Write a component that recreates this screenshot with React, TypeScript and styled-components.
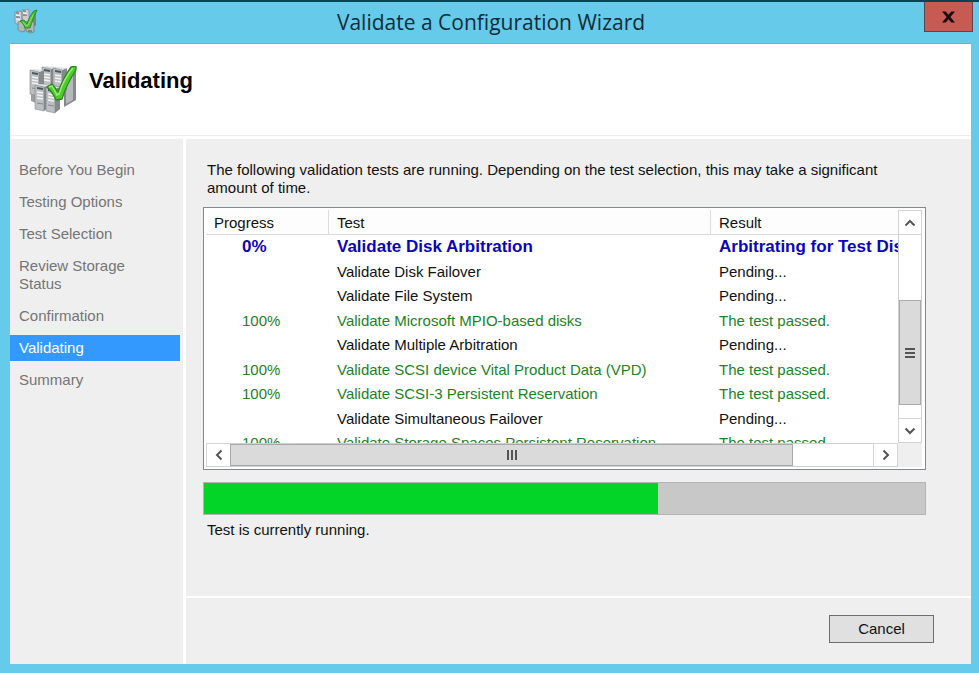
import React from 'react';
import styled, { createGlobalStyle } from 'styled-components';

const Page = createGlobalStyle`
  * { box-sizing: border-box; }
  body { margin: 0; background: #66cbeb; }
  button { font: inherit; color: inherit; padding: 0; margin: 0; border-radius: 0; }
`;

const Window = styled.div`
  display: flex;
  flex-direction: column;
  height: 100vh;
  min-height: 480px;
  padding: 0 8px 9px 10px;
  border-top: 2px solid #0b4256;
  background: #66cbeb;
  color: #111;
  font: 15px/18px "Liberation Sans", Arial, sans-serif;
`;

const TitleBar = styled.header`
  display: flex;
  align-items: flex-start;
  justify-content: space-between;
  height: 41px;
  flex: none;
`;

const TitleSlot = styled.div`
  width: 48px;
  padding: 7px 0 0 4px;
`;

const Title = styled.h1`
  margin: 0;
  padding-top: 4px;
  color: #122b38;
  font: 400 21px/32px "Open Sans", "Noto Sans", sans-serif;
`;

const CloseButton = styled.button`
  display: grid;
  place-items: center;
  width: 49px;
  height: 30px;
  margin-right: -2px;
  border: 1px solid #5d4448;
  border-top: 0;
  background: #c75b54;
`;

const Client = styled.div`
  display: flex;
  flex-direction: column;
  flex: 1;
  min-height: 0;
  border-top: 1px solid #84a9b6;
  background: #fff;
`;

const Banner = styled.div`
  display: flex;
  align-items: flex-start;
  gap: 12px;
  flex: none;
  height: 92px;
  padding: 22px 19px 0;
  border-bottom: 1px solid #ececec;
`;

const Heading = styled.h2`
  margin: 0;
  padding-top: 2px;
  color: #000;
  font-size: 22px;
  line-height: 26px;
  font-weight: 700;
`;

const Columns = styled.div`
  display: flex;
  gap: 3px;
  flex: 1;
  min-height: 0;
  padding-top: 3px;
`;

const Steps = styled.ol`
  display: flex;
  flex-direction: column;
  gap: 6px;
  width: 173px;
  flex: none;
  margin: 0;
  padding: 18px 3px 0 0;
  list-style: none;
  background: #efefef;
`;

const Step = styled.li<{ $current?: boolean }>`
  padding: 4px 40px 4px 9px;
  color: ${p => (p.$current ? '#fff' : '#757575')};
  background: ${p => (p.$current ? '#3399ff' : 'transparent')};
`;

const Right = styled.div`
  display: flex;
  flex-direction: column;
  gap: 2px;
  flex: 1;
  min-width: 0;
`;

const Content = styled.main`
  display: flex;
  flex-direction: column;
  flex: 1;
  min-height: 0;
  padding: 22px 45px 57px 17px;
  background: #efefef;
`;

const Intro = styled.p`
  margin: 0 0 10px;
  padding: 0 4px;
`;

const ListBox = styled.section`
  display: grid;
  grid-template-columns: minmax(0, 1fr) 24px;
  grid-template-rows: minmax(0, 1fr) 24px;
  flex: 1;
  min-height: 0;
  padding: 2px 3px 2px 2px;
  border: 1px solid #828790;
  background: #fff;
`;

const TableView = styled.div`
  overflow: hidden;
`;

const TestTable = styled.table`
  width: 100%;
  table-layout: fixed;
  border-collapse: separate;
  border-spacing: 0;
`;

const Head = styled.th<{ $width?: number }>`
  width: ${p => (p.$width ? `${p.$width}px` : 'auto')};
  height: 25px;
  padding: 2px 0 0 8px;
  border-right: 1px solid #dcdcdc;
  border-bottom: 1px solid #dcdcdc;
  background: #fdfdfd;
  font-weight: 400;
  text-align: left;
  &:last-child { border-right: 0; }
`;

type State = 'running' | 'pending' | 'passed';
const stateColor = { running: '#0a06b8', pending: '#111', passed: '#1d821f' };

const Row = styled.tr<{ $state: State }>`
  height: 24px;
  color: ${p => stateColor[p.$state]};
  font-weight: ${p => (p.$state === 'running' ? 700 : 400)};
  font-size: ${p => (p.$state === 'running' ? 17 : 15)}px;
  &:nth-child(even) { height: 25px; }
`;

const Cell = styled.td<{ $indent?: boolean }>`
  padding: 0 0 0 ${p => (p.$indent ? 36 : 8)}px;
  white-space: nowrap;
`;

const ScrollBar = styled.div<{ $vertical?: boolean }>`
  display: flex;
  flex-direction: ${p => (p.$vertical ? 'column' : 'row')};
  border: 1px solid #cfcfcf;
  background: #fff;
`;

const ArrowButton = styled.button`
  display: grid;
  place-items: center;
  flex: 0 0 23px;
  border: 0;
  outline: 1px solid #d4d4d4;
  background: #fff;
`;

const Track = styled.div<{ $grow: number }>`
  flex: ${p => p.$grow} 1 0;
`;

const Thumb = styled.div<{ $grow: number }>`
  display: grid;
  place-items: center;
  flex: ${p => p.$grow} 1 0;
  border: 1px solid #a9a9a9;
  background: #dadada;
`;

const Corner = styled.div`
  background: #efefef;
`;

const Progress = styled.div`
  flex: none;
  height: 33px;
  margin-top: 12px;
  border: 1px solid #b4b4b4;
  background: #c8c8c8;
`;

const ProgressFill = styled.div`
  height: 100%;
  background: #02d528;
`;

const Status = styled.p`
  margin: 0;
  padding: 6px 4px 0;
`;

const Footer = styled.footer`
  display: flex;
  justify-content: flex-end;
  align-items: flex-start;
  flex: none;
  height: 66px;
  padding: 17px 37px 0 0;
  background: #efefef;
`;

const CancelButton = styled.button`
  width: 105px;
  height: 28px;
  border: 1px solid #6e6e6e;
  background: #e0e0e0;
`;

const Chevron = ({ turn }: { turn: number }) => (
  <svg width="12" height="12" viewBox="0 0 12 12" aria-hidden="true">
    <path d="M1.5 8.5 6 4l4.5 4.5" fill="none" stroke="#555" strokeWidth="2" transform={`rotate(${turn} 6 6)`} />
  </svg>
);

const Grip = ({ turn }: { turn: number }) => (
  <svg width="12" height="12" viewBox="0 0 12 12" aria-hidden="true">
    <path d="M1 2h10M1 6h10M1 10h10" stroke="#555" strokeWidth="2" transform={`rotate(${turn} 6 6)`} />
  </svg>
);

const towers = [[13, 0], [24, 1], [1, 3], [6, 18], [17, 20]];

const ClusterIcon = () => (
  <svg width="48" height="48" viewBox="0 0 48 48" aria-hidden="true">
    <path d="m35 8 12-6v32l-12 7z" fill="#85898c" />
    <path d="m37 12 7-4v26l-7 4z" fill="#b5b9bb" />
    <path d="M2 26v9l5 2V20z" fill="#999ea1" />
    {towers.map(([x, y]) => (
      <g key={`${x}-${y}`} transform={`translate(${x} ${y})`}>
        <path d="m9 3 5-2v22l-5 4z" fill="#84898c" />
        <path d="m0 1 4-1 10 1-5 2z" fill="#dfe2e3" />
        <path d="m0 1 9 2v24l-9-2z" fill="#bbbfc1" stroke="#83888b" strokeWidth=".6" />
        <path d="m2 3 6 1v2L2 5z" fill="#4c5961" />
        <path d="m2 8 6 1M2 11l6 1M2 14l6 1" stroke="#f0f1f2" strokeWidth="1.3" />
        <path d="m2 19 6 1" stroke="#858a8d" />
      </g>
    ))}
    <path d="m18 21 5-3c2 2 4 5 6 8C33 16 37 8 42 1l5-1v4c-6 9-11 19-14 29l-6 1c-2-5-5-9-9-13z" fill="#4ecb2b" stroke="#2b8722" strokeWidth="1.3" strokeLinejoin="round" />
    <path d="m20 21 3-1 5 9 2-1C33 18 38 9 44 2" fill="none" stroke="#9bed75" strokeWidth="1.4" />
  </svg>
);

const SmallClusterIcon = () => (
  <svg width="24" height="26" viewBox="0 0 24 26" aria-hidden="true">
    <path d="m18 3 4-2v15l-4 4z" fill="#7b8580" />
    <path d="m1 3 4-1 3 1v12l-3 1-4-2zM8 1l4-1 3 1v11l-4 1-3-1z" fill="#c9cfd2" stroke="#7d8b93" strokeWidth=".8" />
    <path d="m4 13 4-1 3 1v9l-3 1-4-2zM12 13l5-1 3 1v10l-4 1-4-2z" fill="#aeb7b9" stroke="#748078" strokeWidth=".8" />
    <path d="M2 4h3M9 2h3M2 8h4M9 6h4M14 22h4" stroke="#4a5961" strokeWidth="1.2" />
    <path d="m2 6 4 1M9 4l4 1M2 10l4 1" stroke="#fff" />
    <path d="m6 12 4-1 3 4c2-6 4-10 7-13l3-1c-3 6-5 12-7 18h-5c-1-3-2-5-5-7z" fill="#4cc534" stroke="#2c8d29" />
    <path d="m9 13 3 4 2-1 5-10" fill="none" stroke="#94df72" />
  </svg>
);

const steps = ['Before You Begin', 'Testing Options', 'Test Selection', 'Review Storage Status', 'Confirmation', 'Validating', 'Summary'];

const tests: { name: string; state: State }[] = [
  { name: 'Validate Disk Arbitration', state: 'running' },
  { name: 'Validate Disk Failover', state: 'pending' },
  { name: 'Validate File System', state: 'pending' },
  { name: 'Validate Microsoft MPIO-based disks', state: 'passed' },
  { name: 'Validate Multiple Arbitration', state: 'pending' },
  { name: 'Validate SCSI device Vital Product Data (VPD)', state: 'passed' },
  { name: 'Validate SCSI-3 Persistent Reservation', state: 'passed' },
  { name: 'Validate Simultaneous Failover', state: 'pending' },
  { name: 'Validate Storage Spaces Persistent Reservation', state: 'passed' },
];

const percent = { running: '0%', pending: '', passed: '100%' };
const result = { running: 'Arbitrating for Test Disk', pending: 'Pending...', passed: 'The test passed.' };
const completed = 63;

export default function App() {
  return (
    <>
      <Page />
      <Window>
        <TitleBar>
          <TitleSlot><SmallClusterIcon /></TitleSlot>
          <Title>Validate a Configuration Wizard</Title>
          <CloseButton aria-label="Close">
            <svg width="13" height="12" viewBox="0 0 14 12" aria-hidden="true">
              <path d="M0 0h4l3 3.6L10 0h4L9 6l5 6h-4L7 8.4 4 12H0l5-6z" fill="#170d0d" />
            </svg>
          </CloseButton>
        </TitleBar>
        <Client>
          <Banner>
            <ClusterIcon />
            <Heading>Validating</Heading>
          </Banner>
          <Columns>
            <Steps>
              {steps.map(s => (
                <Step key={s} $current={s === 'Validating'} aria-current={s === 'Validating' ? 'step' : undefined}>{s}</Step>
              ))}
            </Steps>
            <Right>
              <Content>
                <Intro>
                  The following validation tests are running. Depending on the test selection, this may take a significant amount of time.
                </Intro>
                <ListBox>
                  <TableView>
                    <TestTable>
                      <thead>
                        <tr>
                          <Head $width={123}>Progress</Head>
                          <Head $width={382}>Test</Head>
                          <Head>Result</Head>
                        </tr>
                      </thead>
                      <tbody>
                        {tests.map(t => (
                          <Row key={t.name} $state={t.state}>
                            <Cell $indent>{percent[t.state]}</Cell>
                            <Cell>{t.name}</Cell>
                            <Cell>{result[t.state]}</Cell>
                          </Row>
                        ))}
                      </tbody>
                    </TestTable>
                  </TableView>
                  <ScrollBar $vertical>
                    <ArrowButton aria-label="Scroll up"><Chevron turn={0} /></ArrowButton>
                    <Track $grow={67} />
                    <Thumb $grow={104}><Grip turn={0} /></Thumb>
                    <Track $grow={14} />
                    <ArrowButton aria-label="Scroll down"><Chevron turn={180} /></ArrowButton>
                  </ScrollBar>
                  <ScrollBar>
                    <ArrowButton aria-label="Scroll left"><Chevron turn={270} /></ArrowButton>
                    <Thumb $grow={563}><Grip turn={90} /></Thumb>
                    <Track $grow={81} />
                    <ArrowButton aria-label="Scroll right"><Chevron turn={90} /></ArrowButton>
                  </ScrollBar>
                  <Corner />
                </ListBox>
                <Progress role="progressbar" aria-label="Validation progress" aria-valuenow={completed} aria-valuemin={0} aria-valuemax={100}>
                  <ProgressFill style={{ width: `${completed}%` }} />
                </Progress>
                <Status>Test is currently running.</Status>
              </Content>
              <Footer><CancelButton>Cancel</CancelButton></Footer>
            </Right>
          </Columns>
        </Client>
      </Window>
    </>
  );
}
